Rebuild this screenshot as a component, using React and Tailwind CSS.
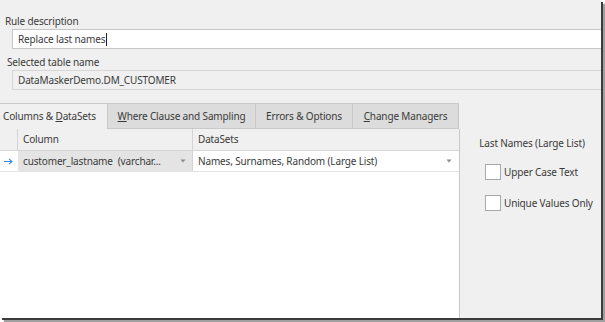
export default function App() {
  const font = { fontFamily: '"Noto Sans", "Liberation Sans", sans-serif' };
  const Caret = () => (
    <svg width="6" height="4" viewBox="0 0 6 4" className="shrink-0">
      <path d="M0.5 0.5 L5.5 0.5 L3 3.5 Z" fill="#8a8a8a" />
    </svg>
  );
  return (
    <div className="w-[605px] h-[322px] bg-white" style={font}>
      <div className="w-[601px] h-[318px] bg-[#f0f0f0] flex flex-col text-[10px] tracking-[-0.15px] text-[#3a3a3a] shadow-[2px_2px_0_#3c3c3c,4px_4px_1px_#a0a0a0] overflow-hidden">
        <div className="pl-[5px] mt-[14px] h-[14px] leading-[14px]">Rule description</div>
        <div className="ml-[12px] mt-[1px] h-[20px] bg-white border border-[#c6c6c6] border-r-0 flex items-center pl-[5px]">
          <span>Replace last names</span>
          <span className="w-px h-[13px] bg-[#222] ml-[1px]"></span>
        </div>
        <div className="pl-[7px] mt-[6px] h-[14px] leading-[14px]">Selected table name</div>
        <div className="ml-[12px] mt-[1px] h-[20px] bg-[#f0f0f0] border border-[#d6d6d6] border-r-0 flex items-center pl-[5px]">
          DataMaskerDemo.DM_CUSTOMER
        </div>
        <div className="mt-[13px] flex h-[26px]">
          <div className="w-[108px] border-t border-r border-[#c8c8c8] bg-[#f0f0f0] flex items-center pl-[3px]">
            <span>Columns &amp; <span className="underline">D</span>ataSets</span>
          </div>
          <div className="w-[148px] border-t border-r border-b border-[#c8c8c8] bg-[#dcdcdc] flex items-center justify-center">
            <span><span className="underline">W</span>here Clause and Sampling</span>
          </div>
          <div className="w-[97px] border-t border-r border-b border-[#c8c8c8] bg-[#dcdcdc] flex items-center justify-center">
            Errors &amp; Options
          </div>
          <div className="w-[106px] border-t border-r border-b border-[#c8c8c8] bg-[#dcdcdc] flex items-center justify-center">
            <span><span className="underline">C</span>hange Managers</span>
          </div>
        </div>
        <div className="flex flex-1">
          <div className="w-[460px] border-r border-[#c8c8c8] bg-white flex flex-col">
            <div className="flex h-[22px] bg-[#f0f0f0] border-b border-[#d4d4d4]">
              <div className="w-[18px] border-r border-[#d4d4d4]"></div>
              <div className="w-[175px] border-r border-[#d4d4d4] flex items-center pl-[5px]">Column</div>
              <div className="flex-1 flex items-center pl-[5px]">DataSets</div>
            </div>
            <div className="flex h-[21px] border-b border-[#e4e4e4]">
              <div className="w-[18px] flex items-center pl-[4px]">
                <svg width="9" height="7" viewBox="0 0 9 7">
                  <path d="M0 3.5 H8 M5 0.8 L8 3.5 L5 6.2" stroke="#3b8ad8" strokeWidth="1.1" fill="none" />
                </svg>
              </div>
              <div className="w-[175px] bg-[#e4e4e4] border-r border-[#d4d4d4] flex items-center pl-[5px] pr-[6px]">
                <span className="flex-1 whitespace-pre">customer_lastname  (varchar...</span>
                <Caret />
              </div>
              <div className="flex-1 flex items-center pl-[5px] pr-[7px]">
                <span className="flex-1">Names, Surnames, Random (Large List)</span>
                <Caret />
              </div>
            </div>
          </div>
          <div className="flex-1 flex flex-col">
            <div className="mt-[7px] h-[14px] leading-[14px] text-center pl-[3px]">Last Names (Large List)</div>
            <div className="mt-[14px] ml-[25px] flex items-center gap-[3px]">
              <div className="w-[16px] h-[16px] bg-white border border-[#a8a8a8]"></div>
              <span>Upper Case Text</span>
            </div>
            <div className="mt-[15px] ml-[25px] flex items-center gap-[3px]">
              <div className="w-[16px] h-[16px] bg-white border border-[#a8a8a8]"></div>
              <span>Unique Values Only</span>
            </div>
          </div>
        </div>
      </div>
    </div>
  );
}
